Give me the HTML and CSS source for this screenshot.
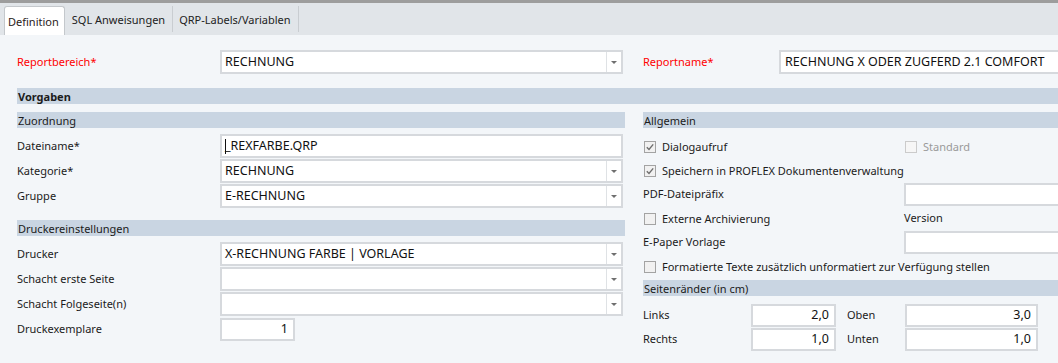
FILE: index.html
```html
<!DOCTYPE html>
<html lang="de">
<head>
  <meta charset="UTF-8" />
  <title>Report Definition</title>
  <link rel="stylesheet" href="styles.css">
</head>
<body>
  <div class="tabbar">
    <div class="tab active">Definition</div>
    <div class="tab">SQL Anweisungen</div>
    <div class="tab">QRP-Labels/Variablen</div>
  </div>

  <div class="content">
    <div class="cols top">
      <div class="row">
        <span class="label req">Reportbereich*</span>
        <div class="box select wide"><span class="val">RECHNUNG</span><span class="drop"></span></div>
      </div>
      <div class="row">
        <span class="label req name-label">Reportname*</span>
        <div class="box name-box"><span class="val">RECHNUNG X ODER ZUGFERD 2.1 COMFORT</span></div>
      </div>
    </div>

    <div class="bar strong">Vorgaben</div>

    <div class="cols main">
      <div class="col">
        <div class="bar">Zuordnung</div>
        <div class="rows">
          <div class="row">
            <span class="label">Dateiname*</span>
            <div class="box wide"><span class="caret"></span><span class="val">_REXFARBE.QRP</span></div>
          </div>
          <div class="row">
            <span class="label">Kategorie*</span>
            <div class="box select wide"><span class="val">RECHNUNG</span><span class="drop"></span></div>
          </div>
          <div class="row">
            <span class="label">Gruppe</span>
            <div class="box select wide"><span class="val">E-RECHNUNG</span><span class="drop"></span></div>
          </div>
        </div>

        <div class="bar later">Druckereinstellungen</div>
        <div class="rows">
          <div class="row">
            <span class="label">Drucker</span>
            <div class="box select wide"><span class="val">X-RECHNUNG FARBE | VORLAGE</span><span class="drop"></span></div>
          </div>
          <div class="row">
            <span class="label">Schacht erste Seite</span>
            <div class="box select wide"><span class="val"></span><span class="drop"></span></div>
          </div>
          <div class="row">
            <span class="label">Schacht Folgeseite(n)</span>
            <div class="box select wide"><span class="val"></span><span class="drop"></span></div>
          </div>
          <div class="row">
            <span class="label">Druckexemplare</span>
            <div class="box num copies"><span class="val">1</span></div>
          </div>
        </div>
      </div>

      <div class="col">
        <div class="bar">Allgemein</div>
        <div class="rows tight">
          <div class="grow">
            <label class="check">
              <span class="cb"><svg width="10" height="10" viewBox="0 0 10 10"><polyline points="1.8,5.2 4,7.4 8.2,2.4" fill="none" stroke="#6e6e6e" stroke-width="1.4"/></svg></span>
              Dialogaufruf
            </label>
            <label class="check off">
              <span class="cb"></span>
              Standard
            </label>
          </div>
          <div class="grow">
            <label class="check span">
              <span class="cb"><svg width="10" height="10" viewBox="0 0 10 10"><polyline points="1.8,5.2 4,7.4 8.2,2.4" fill="none" stroke="#6e6e6e" stroke-width="1.4"/></svg></span>
              Speichern in PROFLEX Dokumentenverwaltung
            </label>
          </div>
          <div class="grow">
            <span class="label-r">PDF-Dateipräfix</span>
            <div class="box long"></div>
          </div>
          <div class="grow">
            <label class="check">
              <span class="cb"></span>
              Externe Archivierung
            </label>
            <span class="label-r">Version</span>
          </div>
          <div class="grow">
            <span class="label-r">E-Paper Vorlage</span>
            <div class="box long"></div>
          </div>
          <div class="grow">
            <label class="check span">
              <span class="cb"></span>
              Formatierte Texte zusätzlich unformatiert zur Verfügung stellen
            </label>
          </div>
        </div>

        <div class="bar margins-bar">Seitenränder (in cm)</div>
        <div class="margins">
          <div class="mrow">
            <span class="label-r">Links</span>
            <div class="box num small"><span class="val">2,0</span></div>
            <span class="label-r">Oben</span>
            <div class="box num medium"><span class="val">3,0</span></div>
          </div>
          <div class="mrow">
            <span class="label-r">Rechts</span>
            <div class="box num small"><span class="val">1,0</span></div>
            <span class="label-r">Unten</span>
            <div class="box num medium"><span class="val">1,0</span></div>
          </div>
        </div>
      </div>
    </div>
  </div>
</body>
</html>
```

FILE: styles.css
```css
body, html {
  margin: 0;
  padding: 0;
  width: 1058px;
  height: 363px;
  overflow: hidden;
  font-family: "Noto Sans", "Open Sans", sans-serif;
  font-size: 11px;
  color: #1b1b1b;
  background: #f3f6f9;
}

/* tabs */
.tabbar {
  height: 32px;
  border-top: 3px solid #9d9d9d;
  background: #e1e5e9;
  display: flex;
  align-items: flex-end;
  padding-left: 4px;
}
.tab {
  display: flex;
  align-items: center;
  padding: 0 7px 0 6px;
  border-right: 1px solid #c9cdd1;
  box-sizing: border-box;
  height: 26px;
  margin-bottom: 3px;
  color: #222;
}
.tab.active {
  height: 29px;
  margin: 0 1px 0 0;
  padding: 0 5px 0 3px;
  background: #fff;
  border: 1px solid #c4c8cc;
  border-bottom: none;
  border-radius: 3px 3px 0 0;
  color: #2a1a1a;
}

/* content */
.content {
  padding: 15px 0 0 17px;
}
.cols {
  display: grid;
  grid-template-columns: 608px 1fr;
  column-gap: 18px;
}
.cols.main {
  margin-top: 8px;
}
.row {
  display: flex;
  align-items: center;
  height: 24px;
}
.label {
  width: 203px;
  flex: none;
  padding-bottom: 2px;
}
.label.req {
  color: #f00;
}
.label.name-label {
  width: 136px;
}
.label-r {
  padding-bottom: 2px;
  white-space: nowrap;
}

.bar {
  height: 16px;
  background: #c9d5e2;
  display: flex;
  align-items: center;
  padding-left: 1px;
  white-space: nowrap;
}
.bar.strong {
  font-weight: bold;
  margin-top: 14px;
}
.bar.later {
  margin-top: 12px;
}
.bar.margins-bar {
  margin-top: 2px;
}

.rows {
  margin-top: 6px;
  display: flex;
  flex-direction: column;
  gap: 1px;
}
.rows.tight {
  gap: 0;
}

/* controls */
.box {
  height: 24px;
  box-sizing: border-box;
  border: 2px solid #d6d9dd;
  background: #fff;
  display: flex;
  align-items: center;
  padding-left: 3px;
  color: #111;
  font-size: 12.5px;
  white-space: nowrap;
  flex: none;
}
.box .val {
  flex: 1;
  padding-bottom: 1px;
}
.box.wide {
  width: 403px;
}
.box.select {
  padding-right: 0;
}
.drop {
  width: 14px;
  height: 100%;
  border-left: 1px solid #dfe2e5;
  display: flex;
  align-items: center;
  justify-content: center;
}
.drop::after {
  content: "";
  border-left: 3px solid transparent;
  border-right: 3px solid transparent;
  border-top: 3px solid #6f6f6f;
}
.caret {
  width: 1px;
  height: 15px;
  background: #111;
  margin-right: -1px;
}
.box.name-box {
  width: 320px;
  padding-left: 4px;
}
.box.num {
  padding-right: 5px;
  text-align: right;
}
.box.copies {
  width: 75px;
  height: 23px;
}
.box.long {
  width: 200px;
  height: 23px;
}
.box.small {
  width: 85px;
  height: 23px;
}
.box.medium {
  width: 133px;
  height: 23px;
}

/* right column */
.grow {
  display: grid;
  grid-template-columns: 261px 1fr;
  align-items: center;
  height: 24px;
}
.check {
  display: flex;
  align-items: center;
  gap: 6px;
  white-space: nowrap;
  padding-left: 1px;
}
.check.span {
  grid-column: 1 / 3;
}
.check.off {
  color: #9a9a9a;
}
.cb {
  width: 12px;
  height: 12px;
  box-sizing: border-box;
  border: 1px solid #a3a3a3;
  background: #f1f1f1;
  display: flex;
  align-items: center;
  justify-content: center;
  margin-top: 1px;
}
.check.off .cb {
  border-color: #cbcbcb;
  background: #f6f6f6;
}

.margins {
  margin-top: 7px;
}
.mrow {
  display: grid;
  grid-template-columns: 108px 96px 58px 133px;
  align-items: center;
  height: 24px;
}
```
